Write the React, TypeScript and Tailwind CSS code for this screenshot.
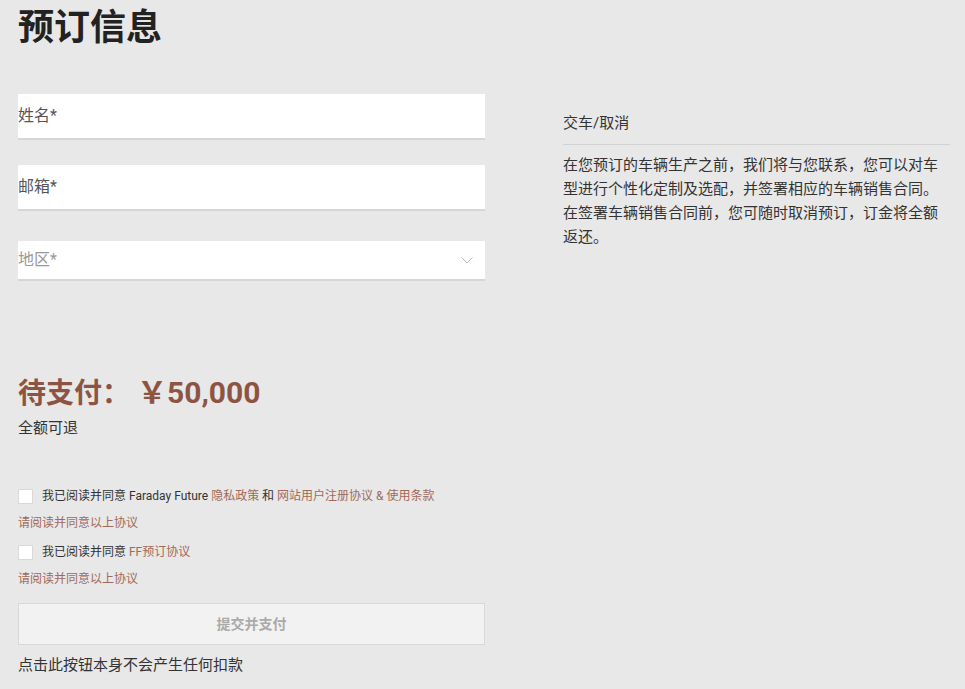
import React from 'react';

const font = { fontFamily: 'Roboto, "Noto Sans CJK SC", sans-serif' };

function Field({ label, className }: { label: string; className?: string }) {
  return (
    <div className={`flex h-[46px] items-center border-b-2 border-[#d6d6d6] bg-white text-[16px] text-[#555] ${className ?? ''}`}>
      {label}
    </div>
  );
}

function Check({ children }: { children: React.ReactNode }) {
  return (
    <label className="flex h-[20px] items-center gap-[9px] text-[12px] text-[#333]">
      <span className="h-[15px] w-[15px] shrink-0 border border-[#d9d9d9] bg-white" />
      <span>{children}</span>
    </label>
  );
}

export default function App() {
  return (
    <div className="min-h-[689px] w-full bg-[#e8e8e8] pl-[18px]" style={font}>
      <h1 className="text-[36px] font-bold leading-[56px] text-[#222]">预订信息</h1>

      <div className="mt-[38px] flex items-start gap-[78px]">
        {/* left column */}
        <div className="w-[467px]">
          <Field label="姓名*" />
          <Field label="邮箱*" className="mt-[25px]" />
          <div className="mt-[30px] flex h-[40px] items-center justify-between border-b-2 border-[#d6d6d6] bg-white pr-[12px] text-[16px] text-[#999]">
            <span>地区*</span>
            <svg width="12" height="7" viewBox="0 0 12 7" fill="none">
              <path d="M0.5 0.5L6 6L11.5 0.5" stroke="#bbb" strokeWidth="1" />
            </svg>
          </div>

          <div className="mt-[94px] text-[28px] font-bold leading-[36px] text-[#8e5443]">
            待支付：&nbsp;<span className="text-[30px]">￥50,000</span>
          </div>
          <div className="mt-[6px] text-[15px] leading-[20px] text-[#333]">全额可退</div>

          <div className="mt-[48px]">
            <Check>
              我已阅读并同意 Faraday Future <span className="text-[#a06a5a]">隐私政策</span> 和{' '}
              <span className="text-[#a06a5a]">网站用户注册协议 &amp; 使用条款</span>
            </Check>
          </div>
          <div className="mt-[8px] text-[12px] leading-[18px] text-[#a06a5a]">请阅读并同意以上协议</div>
          <div className="mt-[10px]">
            <Check>
              我已阅读并同意 <span className="text-[#a06a5a]">FF预订协议</span>
            </Check>
          </div>
          <div className="mt-[8px] text-[12px] leading-[18px] text-[#a06a5a]">请阅读并同意以上协议</div>

          <button className="mt-[15px] flex h-[42px] w-full items-center justify-center border border-[#d8d8d8] bg-[#f2f2f2] text-[14px] font-bold text-[#aaa]">
            提交并支付
          </button>
          <div className="mt-[10px] text-[15px] leading-[20px] text-[#333]">点击此按钮本身不会产生任何扣款</div>
        </div>

        {/* right column */}
        <div className="w-[387px] pt-[19px]">
          <div className="border-b border-[#d2d2d2] pb-[11px] text-[15px] leading-[20px] text-[#333]">交车/取消</div>
          <p className="mt-[8px] text-[15px] leading-[24px] text-[#333]">
            在您预订的车辆生产之前，我们将与您联系，您可以对车型进行个性化定制及选配，并签署相应的车辆销售合同。在签署车辆销售合同前，您可随时取消预订，订金将全额返还。
          </p>
        </div>
      </div>
    </div>
  );
}
